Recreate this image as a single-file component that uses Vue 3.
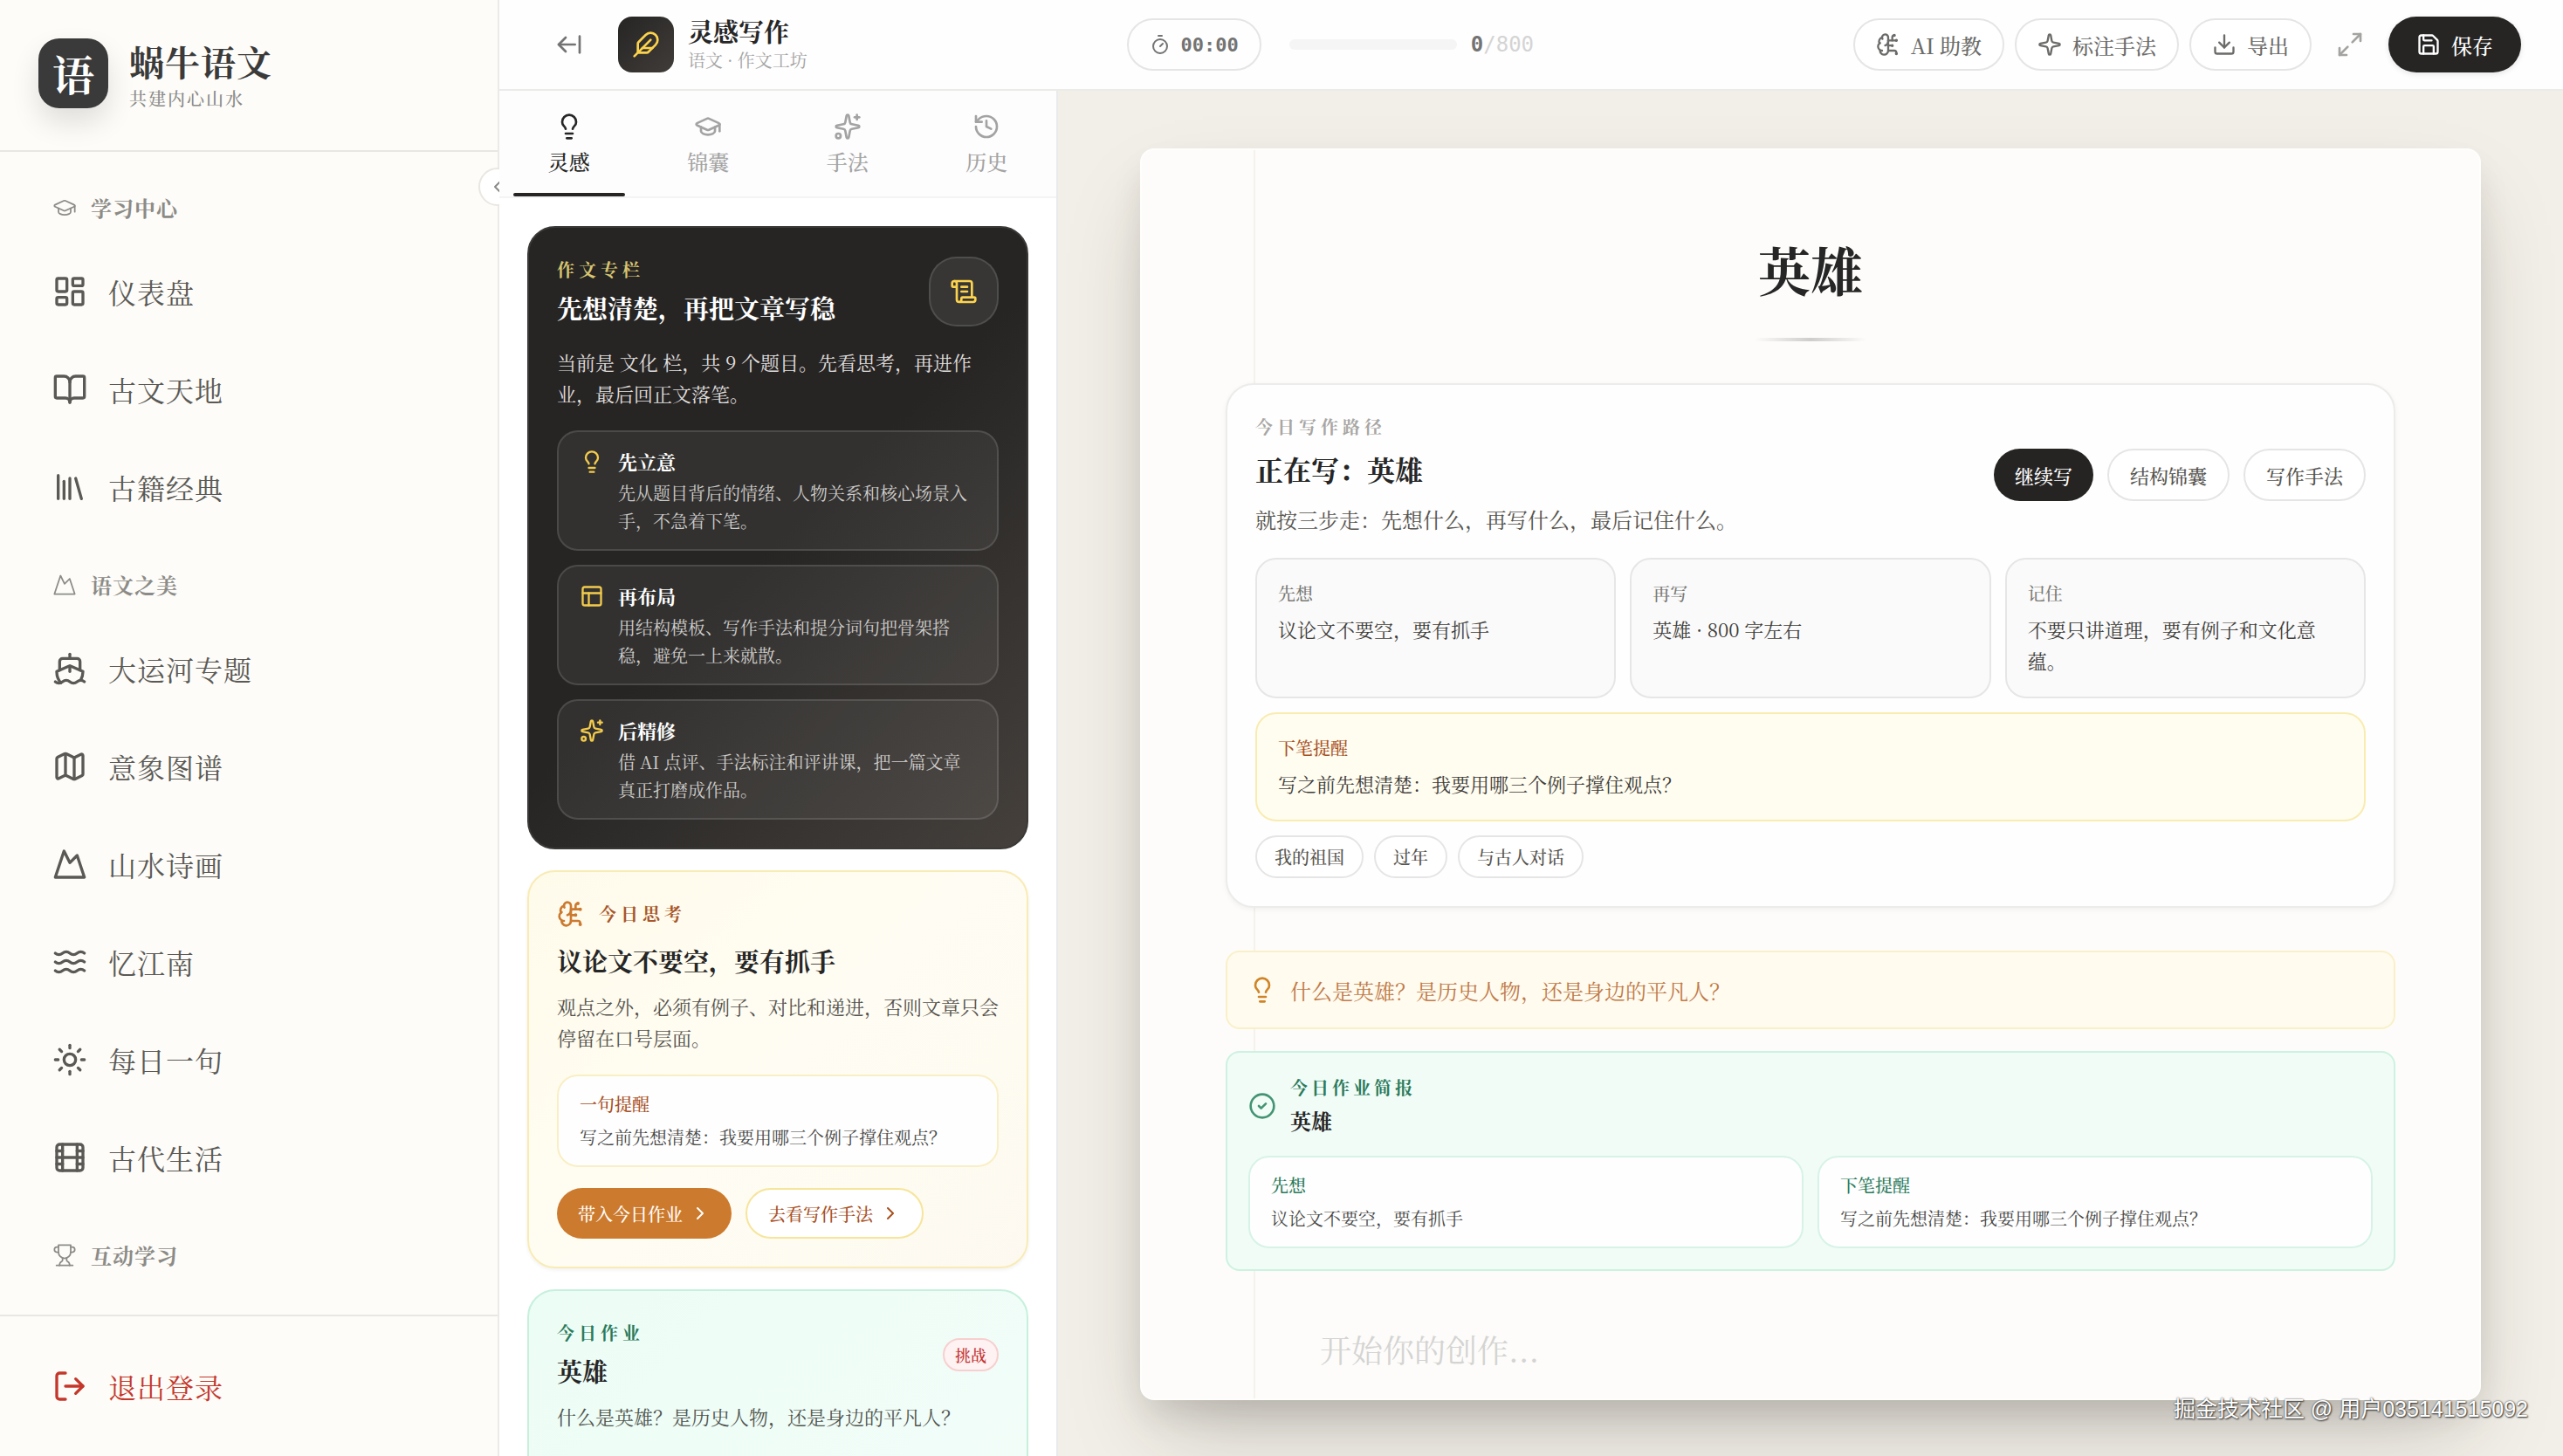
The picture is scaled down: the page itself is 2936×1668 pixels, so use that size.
<script setup>
import { h, ref } from 'vue'

const shapes = {
  cap: '<path d="M21.42 10.922a1 1 0 0 0-.019-1.838L12.83 5.18a2 2 0 0 0-1.66 0L2.6 9.08a1 1 0 0 0 0 1.832l8.57 3.908a2 2 0 0 0 1.66 0z"/><path d="M22 10v6"/><path d="M6 12.5V16a6 3 0 0 0 12 0v-3.5"/>',
  dashboard: '<rect x="3" y="3" width="7" height="9" rx="1"/><rect x="14" y="3" width="7" height="5" rx="1"/><rect x="14" y="12" width="7" height="9" rx="1"/><rect x="3" y="16" width="7" height="5" rx="1"/>',
  book: '<path d="M12 7v14"/><path d="M3 18a1 1 0 0 1-1-1V4a1 1 0 0 1 1-1h5a4 4 0 0 1 4 4 4 4 0 0 1 4-4h5a1 1 0 0 1 1 1v13a1 1 0 0 1-1 1h-6a3 3 0 0 0-3 3 3 3 0 0 0-3-3z"/>',
  library: '<path d="m16 6 4 14"/><path d="M12 6v14"/><path d="M8 8v12"/><path d="M4 4v16"/>',
  mountain: '<path d="m8 3 4 8 5-5 5 15H2L8 3z"/>',
  ship: '<path d="M12 10.189V14"/><path d="M12 2v3"/><path d="M19 13V7a2 2 0 0 0-2-2H7a2 2 0 0 0-2 2v6"/><path d="M19.38 20A11.6 11.6 0 0 0 21 14l-8.188-3.639a2 2 0 0 0-1.624 0L3 14a11.6 11.6 0 0 0 2.81 7.76"/><path d="M2 21c.6.5 1.2 1 2.5 1 2.5 0 2.5-2 5-2 1.3 0 1.9.5 2.5 1s1.2 1 2.5 1c2.5 0 2.5-2 5-2 1.3 0 1.9.5 2.5 1"/>',
  map: '<path d="M14.106 5.553a2 2 0 0 0 1.788 0l3.659-1.83A1 1 0 0 1 21 4.619v12.764a1 1 0 0 1-.553.894l-4.553 2.277a2 2 0 0 1-1.788 0l-4.212-2.106a2 2 0 0 0-1.788 0l-3.659 1.83A1 1 0 0 1 3 19.381V6.618a1 1 0 0 1 .553-.894l4.553-2.277a2 2 0 0 1 1.788 0z"/><path d="M15 5.764v15"/><path d="M9 3.236v15"/>',
  waves: '<path d="M2 6c.6.5 1.2 1 2.5 1C7 7 7 5 9.5 5c2.6 0 2.4 2 5 2 2.5 0 2.5-2 5-2 1.3 0 1.9.5 2.5 1"/><path d="M2 12c.6.5 1.2 1 2.5 1 2.5 0 2.5-2 5-2 2.6 0 2.4 2 5 2 2.5 0 2.5-2 5-2 1.3 0 1.9.5 2.5 1"/><path d="M2 18c.6.5 1.2 1 2.5 1 2.5 0 2.5-2 5-2 2.6 0 2.4 2 5 2 2.5 0 2.5-2 5-2 1.3 0 1.9.5 2.5 1"/>',
  sun: '<circle cx="12" cy="12" r="4"/><path d="M12 2v2"/><path d="M12 20v2"/><path d="m4.93 4.93 1.41 1.41"/><path d="m17.66 17.66 1.41 1.41"/><path d="M2 12h2"/><path d="M20 12h2"/><path d="m6.34 17.66-1.41 1.41"/><path d="m19.07 4.93-1.41 1.41"/>',
  film: '<rect x="3" y="3" width="18" height="18" rx="2"/><path d="M7 3v18"/><path d="M3 7.5h4"/><path d="M3 12h18"/><path d="M3 16.5h4"/><path d="M17 3v18"/><path d="M17 7.5h4"/><path d="M17 16.5h4"/>',
  trophy: '<path d="M6 9H4.5a2.5 2.5 0 0 1 0-5H6"/><path d="M18 9h1.5a2.5 2.5 0 0 0 0-5H18"/><path d="M4 22h16"/><path d="M10 14.66V17c0 .55-.47.98-.97 1.21C7.85 18.75 7 20.24 7 22"/><path d="M14 14.66V17c0 .55.47.98.97 1.21C16.15 18.75 17 20.24 17 22"/><path d="M18 2H6v7a6 6 0 0 0 12 0V2Z"/>',
  logout: '<path d="M9 21H5a2 2 0 0 1-2-2V5a2 2 0 0 1 2-2h4"/><path d="m16 17 5-5-5-5"/><path d="M21 12H9"/>',
  back: '<path d="m9 6-6 6 6 6"/><path d="M3 12h14"/><path d="M21 19V5"/>',
  feather: '<path d="M12.67 19a2 2 0 0 0 1.416-.588l6.154-6.172a6 6 0 0 0-8.49-8.49L5.586 9.914A2 2 0 0 0 5 11.328V18a1 1 0 0 0 1 1z"/><path d="M16 8 2 22"/><path d="M17.5 15H9"/>',
  bulb: '<path d="M15 14c.2-1 .7-1.7 1.5-2.5 1-.9 1.5-2.2 1.5-3.5A6 6 0 0 0 6 8c0 1 .2 2.2 1.5 3.5.7.7 1.3 1.5 1.5 2.5"/><path d="M9 18h6"/><path d="M10 22h4"/>',
  sparkle: '<path d="M11.017 2.814a1 1 0 0 1 1.966 0l1.051 5.558a2 2 0 0 0 1.594 1.594l5.558 1.051a1 1 0 0 1 0 1.966l-5.558 1.051a2 2 0 0 0-1.594 1.594l-1.051 5.558a1 1 0 0 1-1.966 0l-1.051-5.558a2 2 0 0 0-1.594-1.594l-5.558-1.051a1 1 0 0 1 0-1.966l5.558-1.051a2 2 0 0 0 1.594-1.594z"/>',
  history: '<path d="M3 12a9 9 0 1 0 9-9 9.75 9.75 0 0 0-6.74 2.74L3 8"/><path d="M3 3v5h5"/><path d="M12 7v5l4 2"/>',
  scroll: '<path d="M15 12h-5"/><path d="M15 8h-5"/><path d="M19 17V5a2 2 0 0 0-2-2H4"/><path d="M8 21h12a2 2 0 0 0 2-2v-1a1 1 0 0 0-1-1H11a1 1 0 0 0-1 1v1a2 2 0 1 1-4 0V5a2 2 0 1 0-4 0v2a1 1 0 0 0 1 1h3"/>',
  layout: '<rect x="3" y="3" width="18" height="18" rx="2"/><path d="M3 9h18"/><path d="M9 21V9"/>',
  brain: '<path d="M12 5a3 3 0 1 0-5.997.125 4 4 0 0 0-2.526 5.77 4 4 0 0 0 .556 6.588A4 4 0 1 0 12 18Z"/><path d="M9 13a4.5 4.5 0 0 0 3-4"/><path d="M6.003 5.125A3 3 0 0 0 6.401 6.5"/><path d="M3.477 10.896a4 4 0 0 1 .585-.396"/><path d="M6 18a4 4 0 0 1-1.967-.516"/><path d="M12 13h4"/><path d="M12 18h6a2 2 0 0 1 2 2v1"/><path d="M12 8h8"/><path d="M16 8V5a2 2 0 0 1 2-2"/><circle cx="16" cy="13" r=".5"/><circle cx="18" cy="3" r=".5"/><circle cx="20" cy="21" r=".5"/><circle cx="20" cy="8" r=".5"/>',
  timer: '<path d="M10 2h4"/><path d="m12 14 3-3"/><circle cx="12" cy="14" r="8"/>',
  download: '<path d="M12 15V3"/><path d="M21 15v4a2 2 0 0 1-2 2H5a2 2 0 0 1-2-2v-4"/><path d="m7 10 5 5 5-5"/>',
  expand: '<path d="M15 3h6v6"/><path d="m21 3-7 7"/><path d="m3 21 7-7"/><path d="M9 21H3v-6"/>',
  save: '<path d="M15.2 3a2 2 0 0 1 1.4.6l3.8 3.8a2 2 0 0 1 .6 1.4V19a2 2 0 0 1-2 2H5a2 2 0 0 1-2-2V5a2 2 0 0 1 2-2z"/><path d="M17 21v-7a1 1 0 0 0-1-1H8a1 1 0 0 0-1 1v7"/><path d="M7 3v4a1 1 0 0 0 1 1h7"/>',
  check: '<circle cx="12" cy="12" r="10"/><path d="m9 12 2 2 4-4"/>',
  right: '<path d="m9 18 6-6-6-6"/>',
  left: '<path d="m15 18-6-6 6-6"/>',
}
shapes.sparkles = shapes.sparkle + '<path d="M20 2v4"/><path d="M22 4h-4"/><circle cx="4" cy="20" r="2"/>'

const Icon = (props) =>
  h('svg', {
    width: props.size,
    height: props.size,
    viewBox: '0 0 24 24',
    fill: 'none',
    stroke: 'currentColor',
    'stroke-width': props.stroke || 2,
    'stroke-linecap': 'round',
    'stroke-linejoin': 'round',
    'aria-hidden': 'true',
    innerHTML: shapes[props.name],
  })
Icon.props = ['name', 'size', 'stroke']

const sections = [
  {
    icon: 'cap',
    title: '学习中心',
    items: [
      { icon: 'dashboard', label: '仪表盘' },
      { icon: 'book', label: '古文天地' },
      { icon: 'library', label: '古籍经典' },
    ],
  },
  {
    icon: 'mountain',
    title: '语文之美',
    items: [
      { icon: 'ship', label: '大运河专题' },
      { icon: 'map', label: '意象图谱' },
      { icon: 'mountain', label: '山水诗画' },
      { icon: 'waves', label: '忆江南' },
      { icon: 'sun', label: '每日一句' },
      { icon: 'film', label: '古代生活' },
    ],
  },
  { icon: 'trophy', title: '互动学习', items: [] },
]

const tabs = [
  { icon: 'bulb', label: '灵感' },
  { icon: 'cap', label: '锦囊' },
  { icon: 'sparkles', label: '手法' },
  { icon: 'history', label: '历史' },
]
const activeTab = ref('灵感')

const tools = [
  { icon: 'brain', label: 'AI 助教' },
  { icon: 'sparkle', label: '标注手法' },
  { icon: 'download', label: '导出' },
]

const steps = [
  { icon: 'bulb', title: '先立意', text: '先从题目背后的情绪、人物关系和核心场景入手，不急着下笔。' },
  { icon: 'layout', title: '再布局', text: '用结构模板、写作手法和提分词句把骨架搭稳，避免一上来就散。' },
  { icon: 'sparkles', title: '后精修', text: '借 AI 点评、手法标注和评讲课，把一篇文章真正打磨成作品。' },
]

const path = [
  { label: '先想', text: '议论文不要空，要有抓手' },
  { label: '再写', text: '英雄 · 800 字左右' },
  { label: '记住', text: '不要只讲道理，要有例子和文化意蕴。' },
]
const topics = ['我的祖国', '过年', '与古人对话']

const brief = [
  { label: '先想', text: '议论文不要空，要有抓手' },
  { label: '下笔提醒', text: '写之前先想清楚：我要用哪三个例子撑住观点？' },
]

const title = ref('英雄')
const content = ref('')
const target = 800
</script>

<template>
  <div class="app">
    <aside class="sidebar">
      <header class="brand">
        <div class="brand-mark">语</div>
        <div class="brand-text">
          <div class="brand-name">蜗牛语文</div>
          <div class="brand-sub">共建内心山水</div>
        </div>
      </header>
      <nav class="nav">
        <section v-for="s in sections" :key="s.title">
          <h2 class="nav-title"><Icon :name="s.icon" size="28" stroke="1.5" />{{ s.title }}</h2>
          <a v-for="i in s.items" :key="i.label" class="nav-item" href="#">
            <Icon :name="i.icon" size="40" />{{ i.label }}
          </a>
        </section>
      </nav>
      <footer class="side-foot">
        <button class="logout" type="button"><Icon name="logout" size="40" />退出登录</button>
      </footer>
      <button class="collapse" type="button" aria-label="收起侧栏"><Icon name="left" size="24" /></button>
    </aside>

    <main class="main">
      <header class="topbar">
        <div class="top-left">
          <button class="icon-btn dark" type="button" aria-label="返回"><Icon name="back" size="32" /></button>
          <div class="top-mark"><Icon name="feather" size="32" /></div>
          <div>
            <h1 class="top-title">灵感写作</h1>
            <p class="top-sub">语文 · 作文工坊</p>
          </div>
        </div>
        <div class="top-mid">
          <button class="timer" type="button"><Icon name="timer" size="24" />00:00</button>
          <div class="bar"><div class="bar-fill" :style="{ width: (content.length / target) * 100 + '%' }"></div></div>
          <div class="count"><b>{{ content.length }}</b>/{{ target }}</div>
        </div>
        <div class="top-right">
          <button v-for="t in tools" :key="t.label" class="tool" type="button">
            <Icon :name="t.icon" size="28" />{{ t.label }}
          </button>
          <button class="icon-btn" type="button" aria-label="全屏"><Icon name="expand" size="32" /></button>
          <button class="save" type="button"><Icon name="save" size="28" />保存</button>
        </div>
      </header>

      <div class="work">
        <aside class="panel">
          <div class="tabs">
            <button
              v-for="t in tabs"
              :key="t.label"
              type="button"
              class="tab"
              :class="{ active: t.label === activeTab }"
              @click="activeTab = t.label"
            >
              <Icon :name="t.icon" size="32" />{{ t.label }}
            </button>
          </div>
          <div class="panel-body">
            <section class="card card-dark">
              <div class="card-head">
                <div>
                  <div class="eyebrow">作文专栏</div>
                  <h3 class="card-title">先想清楚，再把文章写稳</h3>
                </div>
                <div class="tile"><Icon name="scroll" size="32" /></div>
              </div>
              <p class="dark-text">当前是 文化 栏，共 9 个题目。先看思考，再进作业，最后回正文落笔。</p>
              <div class="steps">
                <div v-for="s in steps" :key="s.title" class="step">
                  <Icon class="step-icon" :name="s.icon" size="28" />
                  <div>
                    <h4 class="step-title">{{ s.title }}</h4>
                    <p class="step-text">{{ s.text }}</p>
                  </div>
                </div>
              </div>
            </section>

            <section class="card card-amber">
              <div class="eyebrow amber-eyebrow"><Icon name="brain" size="32" />今日思考</div>
              <h3 class="card-title amber-title">议论文不要空，要有抓手</h3>
              <p class="amber-text">观点之外，必须有例子、对比和递进，否则文章只会停留在口号层面。</p>
              <div class="note note-amber">
                <div class="note-label">一句提醒</div>
                <p class="note-text">写之前先想清楚：我要用哪三个例子撑住观点？</p>
              </div>
              <div class="amber-actions">
                <button class="act act-fill" type="button">带入今日作业<Icon name="right" size="24" /></button>
                <button class="act act-line" type="button">去看写作手法<Icon name="right" size="24" /></button>
              </div>
            </section>

            <section class="card card-green">
              <div class="card-head">
                <div>
                  <div class="eyebrow">今日作业</div>
                  <h3 class="card-title">英雄</h3>
                </div>
                <span class="badge">挑战</span>
              </div>
              <p class="green-text">什么是英雄？是历史人物，还是身边的平凡人？</p>
            </section>
          </div>
        </aside>

        <section class="canvas">
          <article class="paper">
            <input v-model="title" class="paper-title" type="text" aria-label="作文题目" />
            <div class="rule"></div>

            <section class="plan">
              <div class="plan-head">
                <div>
                  <div class="eyebrow plan-eyebrow">今日写作路径</div>
                  <h2 class="plan-title">正在写：英雄</h2>
                  <p class="plan-sub">就按三步走：先想什么，再写什么，最后记住什么。</p>
                </div>
                <div class="plan-actions">
                  <button class="pill pill-dark" type="button">继续写</button>
                  <button class="pill" type="button">结构锦囊</button>
                  <button class="pill" type="button">写作手法</button>
                </div>
              </div>
              <div class="plan-grid">
                <div v-for="p in path" :key="p.label" class="box">
                  <div class="box-label">{{ p.label }}</div>
                  <p class="box-text">{{ p.text }}</p>
                </div>
              </div>
              <div class="box box-amber">
                <div class="box-label">下笔提醒</div>
                <p class="box-text">写之前先想清楚：我要用哪三个例子撑住观点？</p>
              </div>
              <div class="chips">
                <button v-for="t in topics" :key="t" class="chip" type="button">{{ t }}</button>
              </div>
            </section>

            <div class="hint">
              <Icon name="bulb" size="32" />
              <p>什么是英雄？是历史人物，还是身边的平凡人？</p>
            </div>

            <section class="brief">
              <div class="brief-head">
                <Icon name="check" size="32" />
                <div>
                  <div class="eyebrow brief-eyebrow">今日作业简报</div>
                  <h3 class="brief-title">英雄</h3>
                </div>
              </div>
              <div class="brief-grid">
                <div v-for="b in brief" :key="b.label" class="note note-green">
                  <div class="note-label">{{ b.label }}</div>
                  <p class="note-text">{{ b.text }}</p>
                </div>
              </div>
            </section>

            <textarea v-model="content" class="editor" aria-label="正文" placeholder="开始你的创作..."></textarea>
          </article>
        </section>
      </div>
    </main>

    <div class="watermark">掘金技术社区 @ 用户035141515092</div>
  </div>
</template>

<style>
body {
  margin: 0;
}
</style>

<style scoped>
.app,
.app * {
  box-sizing: border-box;
}
.app {
  display: flex;
  height: 100vh;
  overflow: hidden;
  position: relative;
  background: #f2efe8;
  color: #262626;
  font-family: 'Noto Serif CJK SC', 'Noto Serif SC', 'Source Han Serif SC', 'Noto Sans CJK SC', serif;
}
h1, h2, h3, h4, p {
  margin: 0;
}
button, input, textarea {
  font-family: inherit;
  margin: 0;
}
button {
  display: flex;
  align-items: center;
  border: 0;
  padding: 0;
  background: none;
  white-space: nowrap;
  cursor: pointer;
}
svg {
  display: block;
  flex: none;
}

/* sidebar */
.sidebar {
  position: relative;
  display: flex;
  flex-direction: column;
  flex: none;
  width: 572px;
  background: #fdfcf8;
  border-right: 2px solid #ebeae6;
}
.brand {
  display: flex;
  align-items: center;
  gap: 24px;
  height: 174px;
  padding: 0 44px 4px;
  border-bottom: 2px solid #e9e7e1;
}
.brand-mark {
  width: 80px;
  height: 80px;
  border-radius: 24px;
  background: #3a3a3a;
  color: #fff;
  font-size: 48px;
  font-weight: 700;
  line-height: 80px;
  text-align: center;
  box-shadow: 0 16px 32px rgba(0, 0, 0, 0.12);
}
.brand-text {
  padding-top: 4px;
}
.brand-name {
  font-size: 40px;
  font-weight: 700;
  letter-spacing: 1px;
  line-height: 52px;
  color: #3a3a3a;
}
.brand-sub {
  margin-top: 2px;
  font-size: 20px;
  font-weight: 500;
  letter-spacing: 2px;
  line-height: 30px;
  color: #8a8a88;
}
.nav {
  flex: 1;
  min-height: 0;
  overflow: hidden;
  padding: 8px 0 0 60px;
}
.nav-title {
  display: flex;
  align-items: center;
  gap: 16px;
  padding: 38px 0 22px;
  font-size: 24px;
  font-weight: 700;
  letter-spacing: 1px;
  line-height: 36px;
  color: #8c8b87;
}
.nav-item,
.logout {
  display: flex;
  align-items: center;
  gap: 24px;
  height: 112px;
  font-size: 32px;
  letter-spacing: 1px;
  color: #5a5955;
  text-decoration: none;
}
.side-foot {
  display: flex;
  align-items: center;
  height: 162px;
  padding-left: 60px;
  border-top: 2px solid #e9e7e1;
}
.logout {
  color: #c4372b;
}
.collapse {
  position: absolute;
  top: 192px;
  right: -22px;
  justify-content: center;
  width: 44px;
  height: 44px;
  border: 2px solid #e9e7e1;
  border-radius: 50%;
  background: #fff;
  color: #8a8a88;
}

/* top bar */
.main {
  position: relative;
  display: flex;
  flex-direction: column;
  flex: 1;
  min-width: 0;
}
.topbar {
  display: flex;
  align-items: center;
  justify-content: space-between;
  height: 104px;
  padding: 0 48px;
  background: #fefefe;
  border-bottom: 2px solid #ebebe9;
}
.top-left,
.top-mid,
.top-right {
  display: flex;
  align-items: center;
}
.icon-btn {
  justify-content: center;
  width: 64px;
  height: 64px;
  color: #a3a3a0;
}
.icon-btn.dark {
  color: #737373;
}
.top-mark {
  display: flex;
  align-items: center;
  justify-content: center;
  width: 64px;
  height: 64px;
  margin: 0 16px 0 24px;
  border-radius: 16px;
  background: linear-gradient(135deg, #262524, #403c39);
  color: #fcd34d;
}
.top-title {
  font-size: 29px;
  font-weight: 700;
  line-height: 36px;
}
.top-sub {
  font-size: 20px;
  line-height: 30px;
  color: #a3a3a3;
}
.timer {
  gap: 12px;
  height: 60px;
  padding: 0 24px;
  border: 2px solid #e5e5e5;
  border-radius: 30px;
  color: #737373;
  font-family: 'DejaVu Sans Mono', 'Liberation Mono', monospace;
  font-size: 22px;
  font-weight: 700;
}
.bar {
  width: 192px;
  height: 12px;
  margin: 0 16px 0 32px;
  border-radius: 6px;
  background: #f5f5f5;
  overflow: hidden;
}
.bar-fill {
  height: 100%;
  background: #fbbf24;
}
.count {
  font-family: 'DejaVu Sans Mono', 'Liberation Mono', monospace;
  font-size: 24px;
  color: #d4d4d4;
}
.count b {
  color: #737373;
}
.top-right {
  gap: 12px;
}
.tool {
  gap: 12px;
  height: 60px;
  padding: 0 24px;
  border: 2px solid #e5e5e5;
  border-radius: 30px;
  background: #fff;
  color: #6b6b69;
  font-size: 24px;
  font-weight: 500;
}
.save {
  gap: 12px;
  height: 64px;
  padding: 0 32px;
  border-radius: 32px;
  background: #262524;
  color: #fff;
  font-size: 24px;
  font-weight: 500;
  box-shadow: 0 2px 6px rgba(0, 0, 0, 0.1);
}

/* side panel */
.work {
  display: flex;
  flex: 1;
  min-height: 0;
}
.panel {
  display: flex;
  flex-direction: column;
  flex: none;
  width: 640px;
  background: #fff;
  border-right: 2px solid #e9eaec;
}
.tabs {
  display: flex;
  background: #fdfdfd;
  border-bottom: 2px solid #f4f4f5;
}
.tab {
  position: relative;
  flex: 1;
  flex-direction: column;
  gap: 8px;
  padding: 25px 0 24px;
  color: #a3a3a3;
  font-size: 24px;
  font-weight: 500;
  line-height: 32px;
}
.tab.active {
  color: #262626;
}
.tab.active::after {
  content: '';
  position: absolute;
  left: 10%;
  right: 10%;
  bottom: 0;
  height: 4px;
  border-radius: 2px;
  background: #262524;
}
.panel-body {
  display: flex;
  flex-direction: column;
  gap: 24px;
  flex: 1;
  min-height: 0;
  overflow: hidden;
  padding: 32px;
}
.card {
  flex: none;
  padding: 32px;
  border: 2px solid;
  border-radius: 32px;
}
.card-head {
  display: flex;
  align-items: center;
  justify-content: space-between;
}
.eyebrow {
  font-size: 20px;
  font-weight: 700;
  letter-spacing: 5px;
  line-height: 32px;
}
.card-title {
  margin-top: 6px;
  font-size: 29px;
  font-weight: 700;
  line-height: 44px;
}
.card-dark {
  border-color: #3a3937;
  background: linear-gradient(135deg, #262524 50%, #45403c);
  color: #fff;
}
.card-dark .eyebrow {
  color: #d9c571;
}
.tile {
  display: flex;
  align-items: center;
  justify-content: center;
  width: 80px;
  height: 80px;
  border: 2px solid rgba(255, 255, 255, 0.12);
  border-radius: 32px;
  background: rgba(255, 255, 255, 0.08);
  color: #fcd34d;
}
.dark-text {
  margin-top: 22px;
  font-size: 22px;
  line-height: 36px;
  color: #e0dfde;
}
.steps {
  display: flex;
  flex-direction: column;
  gap: 16px;
  margin-top: 24px;
}
.step {
  display: flex;
  gap: 16px;
  padding: 16px 24px;
  border: 2px solid rgba(255, 255, 255, 0.12);
  border-radius: 24px;
  background: rgba(255, 255, 255, 0.06);
}
.step-icon {
  margin-top: 4px;
  color: #f3cb4c;
}
.step-title {
  font-size: 22px;
  font-weight: 700;
  line-height: 36px;
}
.step-text {
  margin-top: 2px;
  font-size: 20px;
  line-height: 32px;
  color: #cfcdcb;
}
.card-amber {
  border-color: #f9ebb4;
  background: linear-gradient(135deg, #fffbeb, #fffdf3 50%, #fdf9f0);
  box-shadow: 0 2px 4px rgba(0, 0, 0, 0.06);
}
.amber-eyebrow {
  display: flex;
  align-items: center;
  gap: 16px;
  color: #a8572a;
}
.amber-eyebrow svg {
  color: #cb7a30;
}
.amber-title {
  margin-top: 16px;
}
.amber-text {
  margin-top: 12px;
  font-size: 22px;
  line-height: 36px;
  color: #55534e;
}
.note {
  padding: 16px 24px;
  border: 2px solid;
  border-radius: 24px;
  background: #fefefe;
}
.note-label {
  font-size: 20px;
  font-weight: 500;
  line-height: 32px;
}
.note-text {
  margin-top: 6px;
  font-size: 20px;
  line-height: 32px;
  color: #484846;
}
.note-amber {
  margin-top: 24px;
  border-color: #f9efc4;
}
.note-amber .note-label {
  color: #a8501f;
}
.amber-actions {
  display: flex;
  gap: 16px;
  margin-top: 24px;
}
.act {
  gap: 8px;
  height: 58px;
  padding: 0 24px;
  border-radius: 29px;
  font-size: 20px;
  font-weight: 500;
}
.act-fill {
  background: #cc7a2d;
  color: #fff;
}
.act-line {
  border: 2px solid #f6e59b;
  background: #fff;
  color: #a8501f;
}
.card-green {
  min-height: 320px;
  border-color: #c6f0dd;
  background: linear-gradient(135deg, #ecfdf5, #f3fdf9);
}
.card-green .eyebrow {
  color: #2b7a5b;
}
.badge {
  padding: 0 12px;
  border: 2px solid #f8cfcf;
  border-radius: 19px;
  background: #fef2f2;
  color: #c43030;
  font-size: 18px;
  font-weight: 500;
  line-height: 34px;
}
.green-text {
  margin-top: 12px;
  font-size: 22px;
  line-height: 36px;
  color: #50554f;
}

/* writing area */
.canvas {
  display: flex;
  justify-content: center;
  flex: 1;
  min-width: 0;
  padding: 66px 64px 64px;
}
.paper {
  position: relative;
  display: flex;
  flex-direction: column;
  width: 100%;
  max-width: 1536px;
  padding: 96px 96px 0;
  border: 2px solid #fefefd;
  border-radius: 16px;
  background: #fdfcfa;
  overflow: hidden;
  box-shadow: 0 48px 96px -24px rgba(40, 36, 28, 0.25), 0 20px 40px -8px rgba(40, 36, 28, 0.14);
}
.paper::before {
  content: '';
  position: absolute;
  top: 0;
  bottom: 0;
  left: 128px;
  width: 2px;
  background: #f5f1ed;
}
.paper > * {
  position: relative;
  flex: none;
}
.paper-title {
  width: 100%;
  height: 80px;
  padding: 0;
  border: 0;
  background: none;
  color: #262626;
  font-size: 60px;
  font-weight: 700;
  line-height: 80px;
  text-align: center;
  outline: none;
}
.rule {
  width: 128px;
  height: 4px;
  margin: 39px auto 48px;
  background: linear-gradient(90deg, transparent, #cfcdcb, transparent);
}
.plan {
  padding: 32px;
  border: 2px solid #ececea;
  border-radius: 32px;
  background: #fefefe;
  box-shadow: 0 2px 6px rgba(0, 0, 0, 0.05);
}
.plan-head {
  display: flex;
  align-items: center;
  justify-content: space-between;
}
.plan-eyebrow {
  color: #a8a6a3;
}
.plan-title {
  margin-top: 8px;
  font-size: 32px;
  font-weight: 700;
  line-height: 48px;
}
.plan-sub {
  margin-top: 14px;
  font-size: 24px;
  line-height: 40px;
  color: #57554f;
}
.plan-actions {
  display: flex;
  gap: 16px;
}
.pill {
  height: 60px;
  padding: 0 24px;
  border: 2px solid #e5e5e5;
  border-radius: 30px;
  background: #fff;
  color: #57554f;
  font-size: 22px;
  font-weight: 500;
}
.pill-dark {
  border: 0;
  background: #262423;
  color: #fff;
}
.plan-grid {
  display: grid;
  grid-template-columns: repeat(3, 1fr);
  gap: 16px;
  margin-top: 24px;
}
.box {
  padding: 24px 24px 23px;
  border: 2px solid #e6e6e6;
  border-radius: 24px;
  background: #fafafa;
}
.box-label {
  font-size: 20px;
  font-weight: 500;
  line-height: 30px;
  color: #7b7a77;
}
.box-text {
  margin-top: 8px;
  font-size: 22px;
  line-height: 36px;
  color: #3f3e3b;
}
.box-amber {
  margin-top: 16px;
  border-color: #f9ecb0;
  background: #fffdf0;
}
.box-amber .box-label {
  color: #a8501f;
}
.chips {
  display: flex;
  gap: 12px;
  margin-top: 16px;
}
.chip {
  height: 49px;
  padding: 0 20px;
  border: 2px solid #e5e5e5;
  border-radius: 25px;
  background: #fff;
  color: #57554f;
  font-size: 20px;
  font-weight: 500;
}
.hint {
  display: flex;
  align-items: center;
  gap: 16px;
  height: 90px;
  margin-top: 49px;
  padding: 0 24px;
  border: 2px solid #faf0c8;
  border-radius: 16px;
  background: #fffbef;
  color: #bf7a48;
  font-size: 24px;
}
.hint svg {
  color: #cf8427;
}
.brief {
  margin-top: 25px;
  padding: 24px;
  border: 2px solid #ccf2e1;
  border-radius: 16px;
  background: #f1fcf7;
}
.brief-head {
  display: flex;
  align-items: center;
  gap: 16px;
}
.brief-head svg {
  color: #449474;
}
.brief-eyebrow {
  letter-spacing: 4px;
  color: #2b7a5b;
}
.brief-title {
  margin-top: 2px;
  font-size: 24px;
  font-weight: 700;
  line-height: 40px;
}
.brief-grid {
  display: grid;
  grid-template-columns: 1fr 1fr;
  gap: 16px;
  margin-top: 20px;
}
.note-green {
  border-color: #d7f3e7;
}
.note-green .note-label {
  color: #2b7a5b;
}
.paper > .editor {
  display: block;
  flex: 1;
  min-height: 0;
  width: 100%;
  margin-top: 54px;
  padding: 0 108px;
  border: 0;
  background: none;
  color: #262626;
  font-size: 36px;
  line-height: 72px;
  outline: none;
  resize: none;
}
.editor::placeholder {
  color: #d4d4d2;
  opacity: 1;
}
.watermark {
  position: absolute;
  right: 40px;
  bottom: 36px;
  color: #fff;
  font-family: 'Liberation Sans', 'Noto Sans CJK SC', sans-serif;
  font-size: 25px;
  line-height: 36px;
  text-shadow: 0 0 2px #333, 1px 1px 2px #333;
}
</style>
